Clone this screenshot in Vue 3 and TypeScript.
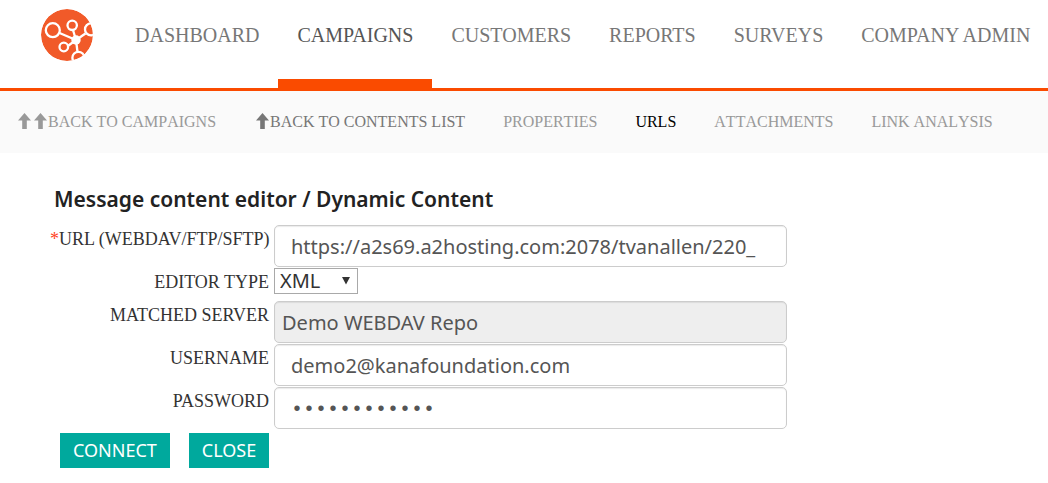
<script setup lang="ts">
import { ref } from 'vue'

interface SubLink {
  label: string
  tone: 'light' | 'mid' | 'current'
  arrows: number
}

const mainLinks: string[] = ['DASHBOARD', 'CAMPAIGNS', 'CUSTOMERS', 'REPORTS', 'SURVEYS', 'COMPANY ADMIN']
const activeMain = ref('CAMPAIGNS')

const subLinks: SubLink[] = [
  { label: 'BACK TO CAMPAIGNS', tone: 'light', arrows: 2 },
  { label: 'BACK TO CONTENTS LIST', tone: 'mid', arrows: 1 },
  { label: 'PROPERTIES', tone: 'light', arrows: 0 },
  { label: 'URLS', tone: 'current', arrows: 0 },
  { label: 'ATTACHMENTS', tone: 'light', arrows: 0 },
  { label: 'LINK ANALYSIS', tone: 'light', arrows: 0 },
]

const url = ref('https://a2s69.a2hosting.com:2078/tvanallen/220_')
const editorType = ref('XML')
const server = ref('Demo WEBDAV Repo')
const username = ref('demo2@kanafoundation.com')
const password = ref('············')
</script>

<template>
  <div class="page">
    <header class="topbar">
      <a href="#" class="logo" aria-label="Home">
        <svg viewBox="0 0 52 52" width="52" height="52" aria-hidden="true">
          <defs>
            <clipPath id="disc"><circle cx="26" cy="26" r="26" /></clipPath>
          </defs>
          <g clip-path="url(#disc)">
            <circle cx="26" cy="26" r="26" fill="#f15a29" />
            <g fill="none" stroke="#fff" stroke-width="2.3">
              <path d="M18.500 24L35 31M32 21L35 31M27.500 36.500L35 31M44.500 24.500L35 31M36.500 43L35 31" />
              <circle cx="11.800" cy="21.200" r="7" />
              <circle cx="31.200" cy="16.300" r="4.700" />
              <circle cx="22.800" cy="38" r="4.300" />
              <circle cx="50" cy="20.400" r="6" />
              <circle cx="37.400" cy="48.800" r="6" />
            </g>
            <circle cx="35" cy="31" r="4.700" fill="#fff" />
          </g>
        </svg>
      </a>
      <nav class="main-nav" aria-label="Main">
        <a
          v-for="label in mainLinks"
          :key="label"
          href="#"
          :class="{ active: label === activeMain }"
          @click.prevent="activeMain = label"
        >{{ label }}</a>
      </nav>
    </header>

    <nav class="sub-nav" aria-label="Campaign">
      <a v-for="link in subLinks" :key="link.label" href="#" :class="link.tone">
        <svg
          v-for="n in link.arrows"
          :key="n"
          class="arrow"
          viewBox="0 0 13 16"
          width="13"
          height="16"
          aria-hidden="true"
        >
          <path d="M6.500 0L13 7.500H8.800V16H4.200V7.500H0Z" fill="currentColor" />
        </svg>
        <span>{{ link.label }}</span>
      </a>
    </nav>

    <main class="content">
      <h1>Message content editor / Dynamic Content</h1>
      <form @submit.prevent>
        <div class="fields">
          <label for="url"><span class="required">*</span>URL (WEBDAV/FTP/SFTP)</label>
          <input id="url" v-model="url" class="box" type="text" />
          <label for="editor">EDITOR TYPE</label>
          <div class="select-wrap">
            <select id="editor" v-model="editorType">
              <option>XML</option>
            </select>
            <svg class="caret" viewBox="0 0 8 8" width="8" height="8" aria-hidden="true">
              <path d="M0 0H8L4 7.500Z" fill="#333" />
            </svg>
          </div>
          <label for="server">MATCHED SERVER</label>
          <input id="server" v-model="server" class="box locked" type="text" readonly />
          <label for="user">USERNAME</label>
          <input id="user" v-model="username" class="box" type="text" />
          <label for="pass">PASSWORD</label>
          <input id="pass" v-model="password" class="box dots" type="password" />
        </div>
        <div class="actions">
          <button type="submit">CONNECT</button>
          <button type="button">CLOSE</button>
        </div>
      </form>
    </main>
  </div>
</template>

<style scoped>
.page {
  font-family: "Liberation Serif", serif;
  color: #333;
}
a {
  text-decoration: none;
}
.topbar {
  display: flex;
  height: 88px;
  border-bottom: 3px solid #fa4b00;
}
.logo {
  margin: 9px 23px 0 41px;
  height: 52px;
}
.main-nav {
  display: flex;
  white-space: nowrap;
}
.main-nav a {
  box-sizing: border-box;
  padding: 23px 19px 0;
  font-size: 20px;
  line-height: 24px;
  color: #777;
}
.main-nav a.active {
  color: #555;
  border-bottom: 9px solid #fa4b00;
}
.sub-nav {
  display: flex;
  align-items: center;
  gap: 38px;
  height: 62px;
  padding-left: 16px;
  background: #fafafa;
  font-size: 16px;
  font-kerning: none;
  white-space: nowrap;
}
.sub-nav a {
  display: flex;
  align-items: center;
}
.arrow {
  margin: 0 1px 2px 2px;
}
.light {
  color: #999;
}
.mid {
  color: #777;
}
.current {
  color: #000;
}
.content {
  padding: 34px 50px 15px;
}
h1 {
  margin: 0 0 14px;
  padding-left: 4px;
  font: 600 21px/24px "Noto Sans", sans-serif;
  color: #222;
}
.fields {
  display: grid;
  grid-template-columns: 219px minmax(0, 513px);
  column-gap: 5px;
  row-gap: 1px;
}
label {
  font-size: 18px;
  line-height: 28px;
  text-align: right;
  white-space: nowrap;
}
.required {
  color: #f42;
}
.box {
  box-sizing: border-box;
  width: 100%;
  height: 42px;
  padding: 0 16px;
  border: 1px solid #ccc;
  border-radius: 5px;
  background: #fff;
  box-shadow: inset 0 1px 1px rgba(0, 0, 0, 0.08);
  color: #555;
  font: 20px "Noto Sans", sans-serif;
  outline: none;
}
.locked {
  padding: 0 7px;
  background: #eee;
}
.dots {
  padding-top: 3px;
  font-family: "Liberation Mono", monospace;
}
.select-wrap {
  position: relative;
  width: 84px;
  height: 32px;
}
select {
  display: block;
  width: 100%;
  height: 26px;
  padding: 0 5px;
  border: 1px solid #a9a9a9;
  border-radius: 0;
  appearance: none;
  background: #fff;
  color: #333;
  font: 20px/24px "Noto Sans", sans-serif;
}
.caret {
  position: absolute;
  top: 9px;
  right: 8px;
  pointer-events: none;
}
.actions {
  display: flex;
  gap: 19px;
  padding: 4px 0 0 10px;
}
button {
  height: 35px;
  padding: 0 13px 2px;
  border: 0;
  background: #00a99d;
  color: #fff;
  font: 18px "Noto Sans", sans-serif;
}
</style>

<style>
body {
  margin: 0;
  background: #fff;
}
</style>
